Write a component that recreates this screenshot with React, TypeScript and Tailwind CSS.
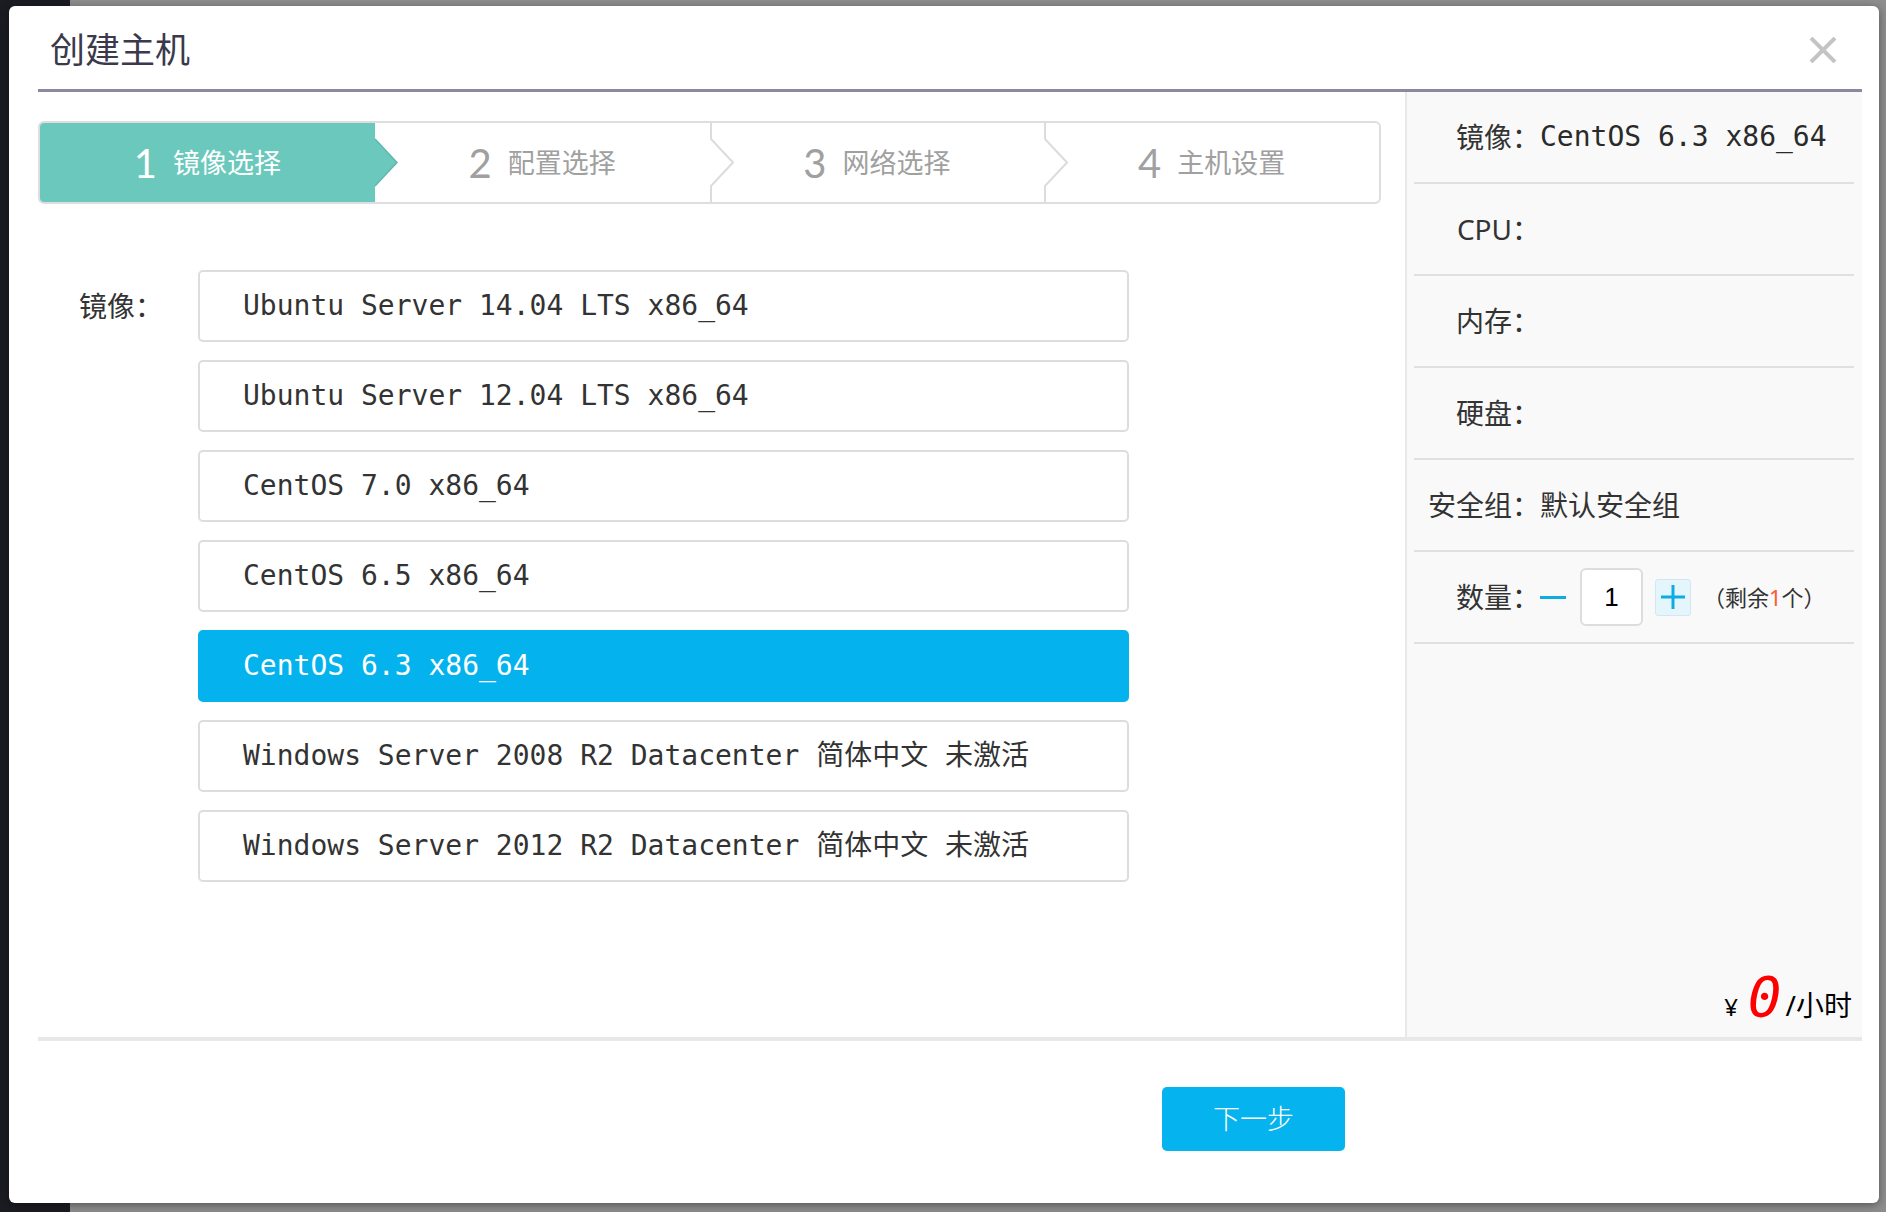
import { Fragment } from 'react'

const sans = "font-['Noto_Sans','Noto_Sans_CJK_SC',sans-serif]"
const mono = "font-['DejaVu_Sans_Mono','Noto_Sans_CJK_SC',monospace]"

const steps = [
  { num: '1', label: '镜像选择' },
  { num: '2', label: '配置选择' },
  { num: '3', label: '网络选择' },
  { num: '4', label: '主机设置' },
]

const images = [
  'Ubuntu Server 14.04 LTS x86_64',
  'Ubuntu Server 12.04 LTS x86_64',
  'CentOS 7.0 x86_64',
  'CentOS 6.5 x86_64',
  'CentOS 6.3 x86_64',
  'Windows Server 2008 R2 Datacenter 简体中文 未激活',
  'Windows Server 2012 R2 Datacenter 简体中文 未激活',
]

const selected = 4

function StepBar() {
  return (
    <div className="relative mr-[24px] flex h-[83px] rounded-[6px] border-2 border-[#dedede] bg-white">
      {steps.map((s, i) => {
        const active = i === 0
        return (
          <div
            key={s.num}
            className={`relative flex flex-1 items-center justify-center gap-[16px] ${
              active ? 'rounded-l-[4px] bg-[#6bc8bc] text-white' : 'text-[#a0a0a0]'
            }`}
          >
            {/* chevron between inactive steps */}
            {i > 1 && (
              <svg className="absolute left-0 top-0 h-full w-[24px]" viewBox="0 0 24 79" preserveAspectRatio="none">
                <polyline points="1,0 1,16 23,39.5 1,63 1,79" fill="none" stroke="#dcdcdc" strokeWidth="2" />
              </svg>
            )}
            {active && (
              <svg className="absolute left-full top-0 z-10 h-full w-[23px]" viewBox="0 0 23 79" preserveAspectRatio="none">
                <polygon points="0,16 22,39.5 0,63" fill="#6bc8bc" />
                <polyline points="0,16 22,39.5 0,63" fill="none" stroke="#5db8ad" strokeWidth="1.5" />
              </svg>
            )}
            <span className="font-['Lato','Noto_Sans',sans-serif] text-[40px] font-normal leading-none">{s.num}</span>
            <span className={`${sans} text-[27px] leading-none`}>{s.label}</span>
          </div>
        )
      })}
    </div>
  )
}

function ImageList() {
  return (
    <div className="mt-[66px] flex">
      <div className={`${sans} flex h-[72px] w-[160px] shrink-0 items-center pl-[41px] text-[28px] text-[#333]`}>镜像：</div>
      <div className="flex w-[931px] flex-col gap-[18px]">
        {images.map((name, i) => (
          <div
            key={name}
            className={`${mono} flex h-[72px] items-center rounded-[5px] border-2 pl-[43px] text-[28px] leading-[40px] ${
              i === selected ? 'border-[#04b3ed] bg-[#04b3ed] text-white' : 'border-[#dddddd] bg-white text-[#333]'
            }`}
          >
            {name}
          </div>
        ))}
      </div>
    </div>
  )
}

function SummaryRow({ label, children }: { label: string; children?: React.ReactNode }) {
  return (
    <div className="flex h-[92px] items-center border-b-2 border-[#e0e0e0]">
      <div className={`${sans} w-[126px] shrink-0 text-right text-[28px] text-[#333]`}>{label}</div>
      <div className="flex items-center">{children}</div>
    </div>
  )
}

function Summary() {
  return (
    <div className="flex w-[457px] shrink-0 flex-col border-l-2 border-[#e8e8e8] bg-[#f9f9f9]">
      <div className="ml-[7px] mr-[8px]">
        <SummaryRow label="镜像：">
          <span className={`${mono} text-[28px] leading-[40px] text-[#2a2a2a]`}>CentOS 6.3 x86_64</span>
        </SummaryRow>
        <SummaryRow label="CPU：" />
        <SummaryRow label="内存：" />
        <SummaryRow label="硬盘：" />
        <SummaryRow label="安全组：">
          <span className={`${sans} text-[28px] text-[#333]`}>默认安全组</span>
        </SummaryRow>
        <SummaryRow label="数量：">
          <span className="h-[3px] w-[26px] bg-[#0eabe4]" />
          <div className="ml-[14px] flex h-[58px] w-[63px] items-center justify-center rounded-[6px] border-2 border-[#dddddd] bg-white font-['Liberation_Sans',sans-serif] text-[26px] text-black">
            1
          </div>
          <button className="relative ml-[12px] flex h-[37px] w-[36px] items-center justify-center rounded-[3px] border border-[#cfe8f2] bg-[#e4f6fc]">
            <svg width="26" height="26" viewBox="0 0 26 26">
              <path d="M13 1v24M1 13h24" stroke="#0eabe4" strokeWidth="3" />
            </svg>
          </button>
          <span className={`${sans} ml-[12px] text-[22px] text-[#333]`}>
            （剩余<span className="text-[#ff5a36]">1</span>个）
          </span>
        </SummaryRow>
      </div>
      <div className="flex flex-1 items-end justify-end pb-[12px] pr-[10px]">
        <div className="flex items-baseline leading-none">
          <span className={`${sans} text-[24px] text-black`}>¥</span>
          <span className={`${mono} ml-[10px] text-[56px] italic text-[#ff0000]`}>0</span>
          <span className={`${sans} ml-[4px] text-[28px] text-black`}>/小时</span>
        </div>
      </div>
    </div>
  )
}

export default function App() {
  return (
    <div className="flex h-[1212px] w-[1886px] bg-[linear-gradient(to_right,#1b1b22_70px,#8d8d8d_70px)] pb-[9px] pl-[9px] pr-[7px] pt-[6px]">
      <div className="flex flex-1 flex-col rounded-[6px] bg-white pl-[29px] pr-[17px] shadow-[0_2px_8px_rgba(0,0,0,0.4)]">
        {/* header */}
        <div className="flex h-[86px] shrink-0 items-center justify-between border-b-[3px] border-[#8b889f] pt-[5px]">
          <h1 className={`${sans} pl-[12px] text-[35px] font-normal text-[#3b394c]`}>创建主机</h1>
          <button className="mr-[25px]" aria-label="关闭">
            <svg width="28" height="26" viewBox="0 0 28 26">
              <path d="M2 1l24 24M26 1L2 25" stroke="#c4c4c4" strokeWidth="4" />
            </svg>
          </button>
        </div>

        {/* body */}
        <div className="flex h-[945px] shrink-0">
          <div className="flex-1 pt-[29px]">
            <StepBar />
            <ImageList />
          </div>
          <Summary />
        </div>

        <div className="h-[4px] shrink-0 bg-[#e8e8e8]" />

        {/* footer */}
        <div className="flex flex-1 items-start pl-[1124px] pt-[46px]">
          <button className={`${sans} h-[64px] w-[183px] rounded-[5px] bg-[#05b4ee] text-[27px] font-light text-white`}>下一步</button>
        </div>
      </div>
    </div>
  )
}
